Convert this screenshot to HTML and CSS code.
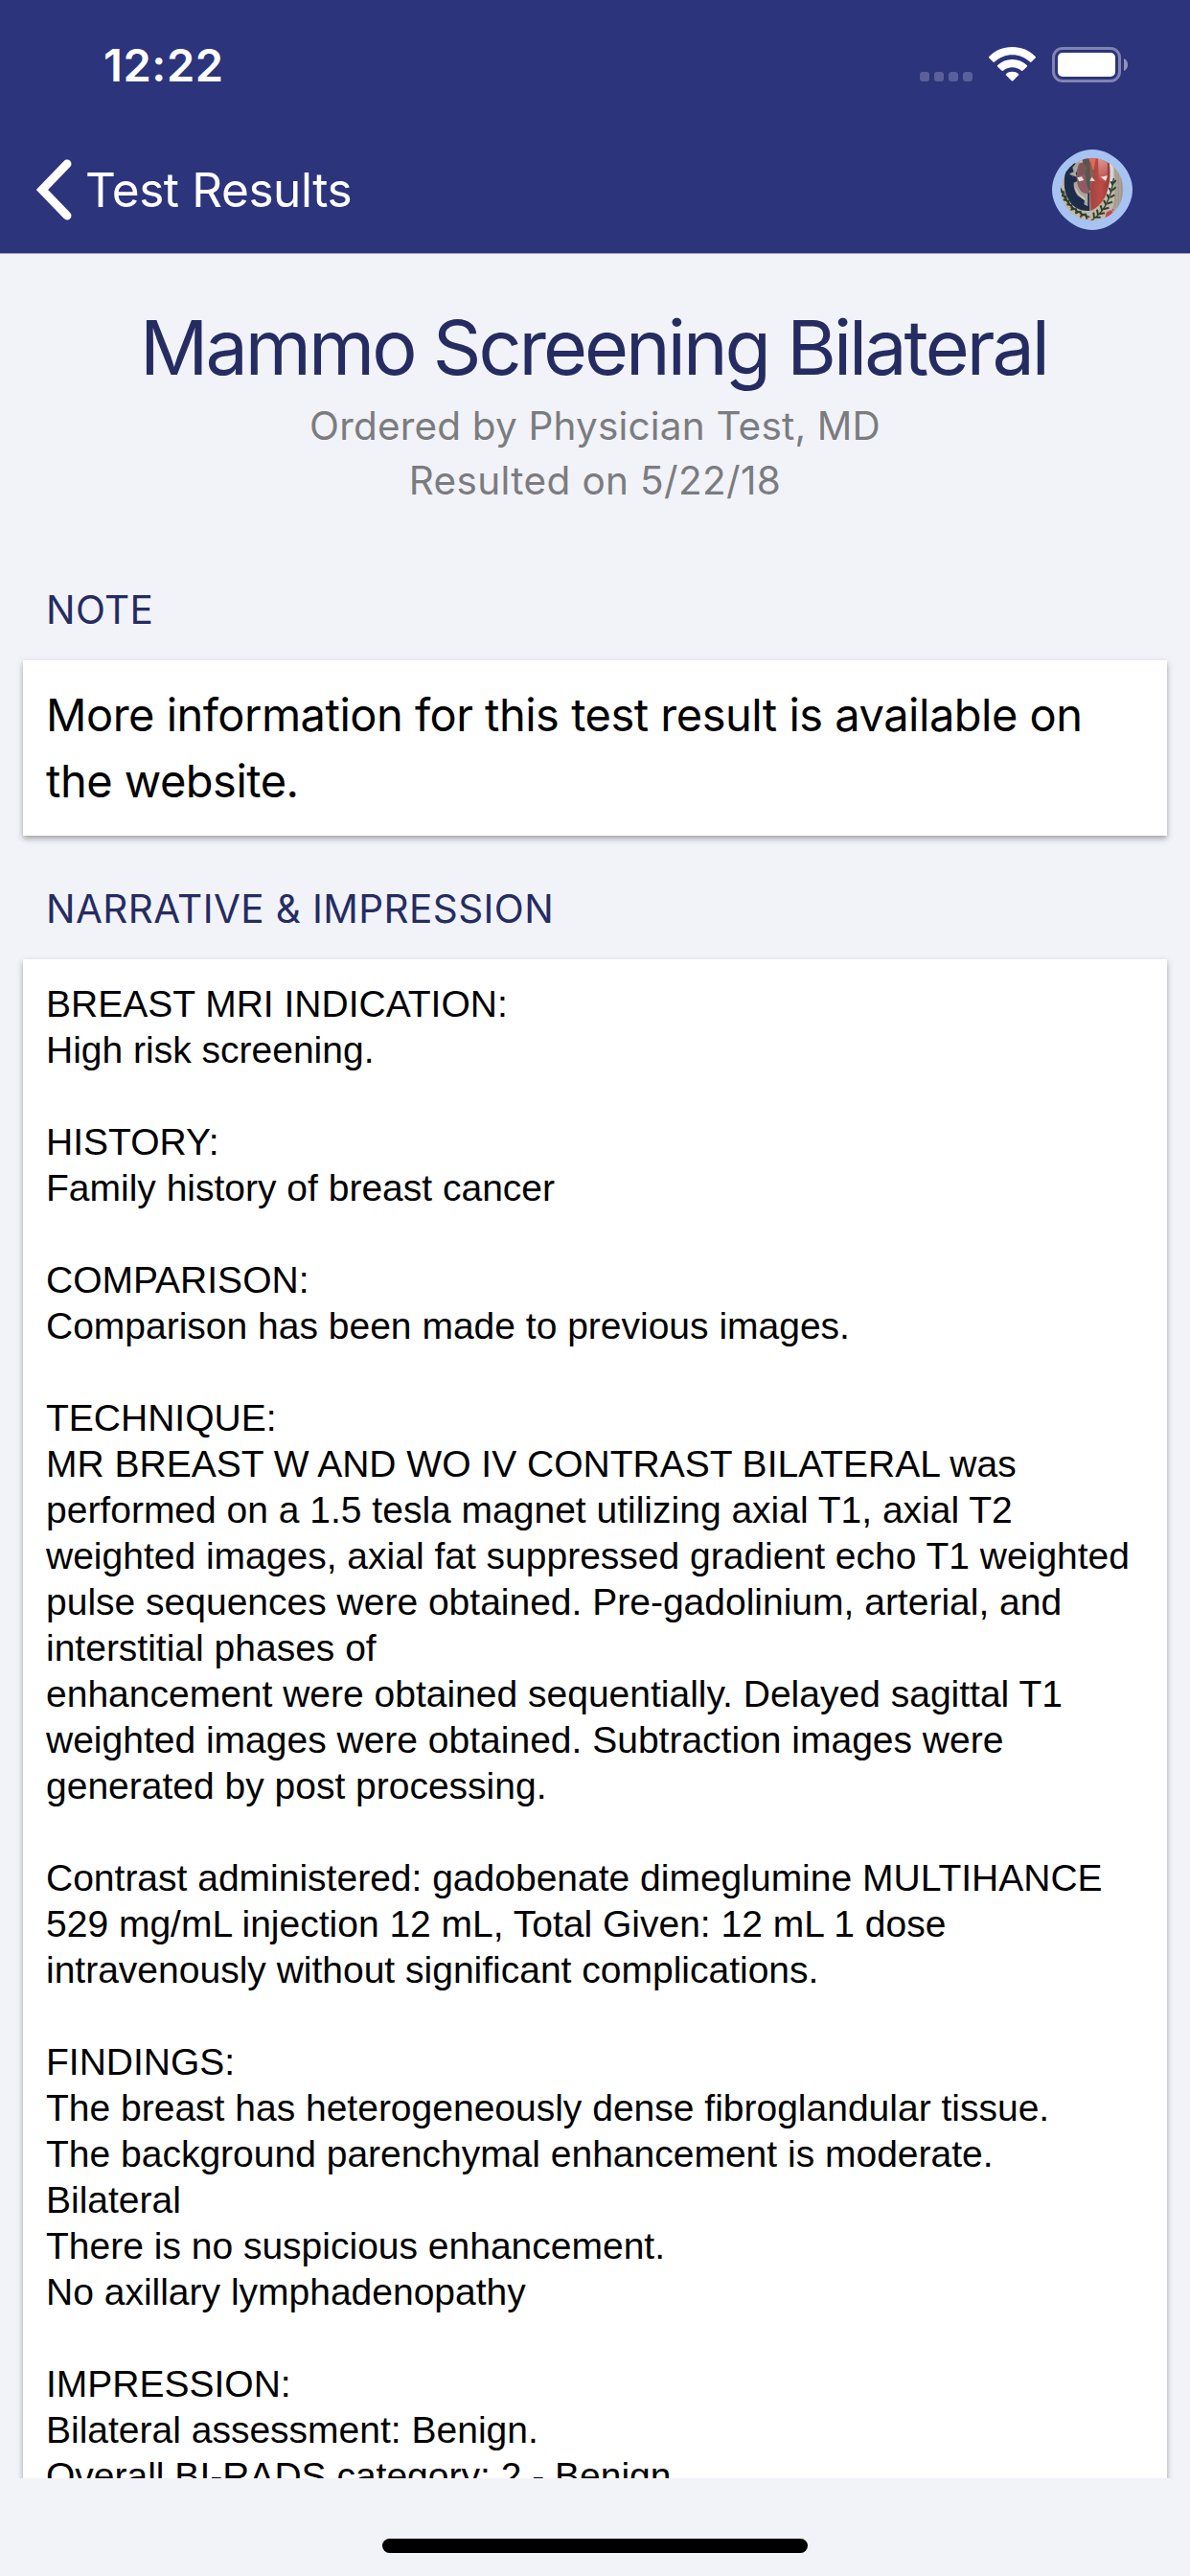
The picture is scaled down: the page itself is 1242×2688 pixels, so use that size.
FILE: index.html
```html
<!DOCTYPE html>
<html lang="en">
<head>
<meta charset="utf-8">
<title>Test Results</title>
<link rel="stylesheet" href="styles.css">
</head>
<body>
<div class="screen">
  <header class="header">
    <div class="status-bar">
      <span class="time">12:22</span>
      <div class="status-icons">
        <div class="dots"><i></i><i></i><i></i><i></i></div>
        <svg class="wifi" width="49" height="36" viewBox="0 0 49 36" fill="#fff">
          <path d="M24.5 0C34 0 42.600 3.600 48.600 9.900C49.200 10.500 49.200 11 48.600 11.600L44.600 15.500C44 16.100 43.500 16.100 42.900 15.500C38 10.800 31.500 8.200 24.500 8.200C17.500 8.200 11 10.800 6.100 15.500C5.500 16.100 5 16.100 4.400 15.500L.4 11.600C-.2 11-.2 10.500 .4 9.900C6.400 3.600 15 0 24.500 0Z"/>
          <path d="M24.500 13C30.400 13 35.700 15.200 39.700 19C40.300 19.600 40.300 20.100 39.700 20.700L35.700 24.600C35.100 25.200 34.600 25.200 34 24.700C31.400 22.400 28.100 21.200 24.500 21.200C20.900 21.200 17.600 22.400 15 24.700C14.400 25.200 13.900 25.200 13.300 24.600L9.300 20.700C8.700 20.100 8.700 19.600 9.300 19C13.300 15.200 18.600 13 24.500 13Z"/>
          <path d="M24.500 25.800C27 25.800 29.200 26.600 30.900 28C31.500 28.500 31.500 29 30.900 29.600L25.300 35.200C24.800 35.700 24.200 35.700 23.700 35.200L18.100 29.600C17.500 29 17.500 28.500 18.100 28C19.800 26.600 22 25.800 24.500 25.800Z"/>
        </svg>
        <svg class="battery" width="80" height="37" viewBox="0 0 80 37">
          <rect x="1.500" y="1.500" width="69" height="34" rx="9.500" fill="none" stroke="#fff" stroke-opacity=".4" stroke-width="3"/>
          <rect x="6" y="6" width="60" height="25" rx="5" fill="#fff"/>
          <path d="M75 12C77.500 13 79 15.500 79 18.500S77.500 24 75 25Z" fill="#fff" fill-opacity=".48"/>
        </svg>
      </div>
    </div>
    <nav class="nav">
      <a class="back">
        <svg width="37" height="64" viewBox="0 0 37 64" fill="none" stroke="#fff" stroke-width="9" stroke-linecap="round" stroke-linejoin="miter"><path d="M32 5L6 32L32 59"/></svg>
        <span class="back-label">Test Results</span>
      </a>
      <svg class="avatar" width="84" height="84" viewBox="24 18 252 252">
        <defs>
          <clipPath id="face"><circle cx="149" cy="143" r="98"/></clipPath>
          <linearGradient id="red" x1="0" x2="1" y1="0" y2="0"><stop offset="0" stop-color="#a04440"/><stop offset=".55" stop-color="#bd4b45"/><stop offset="1" stop-color="#9a3836"/></linearGradient>
          <linearGradient id="shine" x1="0" x2="0" y1="0" y2="1"><stop offset="0" stop-color="#e8aaa0" stop-opacity=".8"/><stop offset="1" stop-color="#e8aaa0" stop-opacity="0"/></linearGradient>
        </defs>
        <path d="M150 18C214 18 276 80 276 144S214 270 150 270S24 208 24 144S86 18 150 18Z" fill="#a6c3f2"/>
        <g clip-path="url(#face)">
          <rect x="45" y="40" width="210" height="210" fill="#c0b8aa"/>
          <path d="M213 45H255V225H205C226 170 230 110 213 45Z" fill="#aaa59a"/>
          <path d="M222 80V200M232 80V200M241 90V190" stroke="#8f8b82" stroke-width="2"/>
          <path d="M92 46C62 68 54 130 72 168C86 198 110 212 142 210V150L100 122L84 96L100 70Z" fill="#1e2c4b"/>
          <path d="M92 60C78 80 76 98 90 104L82 118C80 150 104 172 126 196L132 176L118 150L102 122L112 70Z" fill="#1e2c4b"/>
          <path d="M98 62L110 52L106 78L98 92L102 104L84 98L78 94L92 88L88 74ZM92 122L102 118Q108 150 136 156V196L124 190L126 178L104 162Q90 142 92 122Z" fill="#a9a69c"/>
          <path d="M96 132Q104 158 126 170L132 180L112 164Q98 152 96 132Z" fill="#d8d2c4"/>
          <path d="M110 60C96 84 98 132 116 150Q128 160 141 154V56Z" fill="#8f5a63"/>
          <path d="M118 45H146V150Q132 142 130 110Z" fill="#575653"/>
          <path d="M110 66Q122 54 132 76L128 96L106 100Z" fill="#7c5559"/>
          <path d="M142 44H202C212 92 208 184 145 210Z" fill="url(#red)"/>
          <path d="M168 44H196Q200 90 194 126L170 108Z" fill="url(#shine)"/>
          <path d="M138 44H162L154 84L148 74Z" fill="#e2695c"/>
          <path d="M144 54L156 96L150 122L143 140Z" fill="#856156"/>
          <path d="M103 106L117 103L124 114L109 118ZM142 116L149 104L159 117ZM176 104L198 100L192 116Z" fill="#e9e3dc"/>
          <path d="M207 50Q218 110 200 158" fill="none" stroke="#d5d7df" stroke-width="10"/>
          <path d="M194 215l14-8 8 10-12 14-14 4zM212 202l6 4-4 5z" fill="#c84550"/>
          <path d="M51 138Q68 204 142 230M147 240Q204 206 217 108" fill="none" stroke="#2c4029" stroke-width="4"/>
          <path d="M58 148l-8 2M60 148l2 12M64 164l-10-2M66 162l3 15M72 178l-13-3M74 176l4 16M84 192l-14-2M84 190l4 17M97 203l-15 3M98 202l4 17M111 212l-15 5M112 210l6 17M126 220l-14 8M128 218l6 18M156 234l-2-19M160 230l16 0M168 224l-3-18M172 220l17-3M181 210l-5-17M185 205l17-5M194 192l-8-15M197 188l16-6M203 172l-7-14M206 168l14-8M210 152l-7-14M212 146l12-10M215 130l-7-12M216 124l8-10" fill="none" stroke="#2c4029" stroke-width="6"/>
          <path d="M60 158h4M80 198h4M111 231h5M152 237h4" stroke="#b84740" stroke-width="4"/>
        </g>
      </svg>
    </nav>
  </header>

  <main class="content">
    <h1 class="title">Mammo Screening Bilateral</h1>
    <p class="meta">Ordered by Physician Test, MD<br><span class="resulted">Resulted on 5/22/18</span></p>

    <h2 class="section-title">NOTE</h2>
    <section class="card note">More information for this test result is available on<br>the website.</section>

    <h2 class="section-title narrative-title">NARRATIVE &amp; IMPRESSION</h2>
    <section class="card report">BREAST MRI INDICATION:
High risk screening.

HISTORY:
Family history of breast cancer

COMPARISON:
Comparison has been made to previous images.

TECHNIQUE:
MR BREAST W AND WO IV CONTRAST BILATERAL was
performed on a 1.5 tesla magnet utilizing axial T1, axial T2
weighted images, axial fat suppressed gradient echo T1 weighted
pulse sequences were obtained. Pre-gadolinium, arterial, and
interstitial phases of
enhancement were obtained sequentially. Delayed sagittal T1
weighted images were obtained. Subtraction images were
generated by post processing.

Contrast administered: gadobenate dimeglumine MULTIHANCE
529 mg/mL injection 12 mL, Total Given: 12 mL 1 dose
intravenously without significant complications.

FINDINGS:
The breast has heterogeneously dense fibroglandular tissue.
The background parenchymal enhancement is moderate.
Bilateral
There is no suspicious enhancement.
No axillary lymphadenopathy

IMPRESSION:
Bilateral assessment: Benign.
Overall BI-RADS category: 2 - Benign</section>
  </main>

  <footer class="home-area"><div class="home-indicator"></div></footer>
</div>
</body>
</html>
```
FILE: styles.css
```css
* { box-sizing: border-box; margin: 0; padding: 0; }

body {
  background: #f2f3f9;
  font-family: Inter, "Liberation Sans", sans-serif;
  color: #000;
}

.screen {
  width: 1242px;
  height: 2688px;
  display: flex;
  flex-direction: column;
  overflow: hidden;
}

/* Header */
.header {
  flex: none;
  height: 265px;
  background: #2c347c;
  border-bottom: 1px solid #a3a3a8;
  color: #fff;
}

.status-bar {
  height: 132px;
  padding: 40px 65px 0 108px;
  display: flex;
  justify-content: space-between;
  align-items: flex-start;
}

.time {
  font-size: 47px;
  font-weight: 600;
  line-height: 56px;
  letter-spacing: .6px;
}

.status-icons {
  display: flex;
  align-items: flex-start;
  padding-top: 9px;
}

.dots {
  display: flex;
  gap: 5px;
  padding-top: 26px;
  margin-right: 17px;
}

.dots i {
  width: 10px;
  height: 10px;
  border-radius: 3px;
  background: rgba(255, 255, 255, .22);
}

.battery { margin-left: 17px; margin-right: -1px; }

.nav {
  height: 132px;
  padding: 0 60px 0 38px;
  display: flex;
  justify-content: space-between;
  align-items: center;
}

.back { display: flex; align-items: center; }

.back-label {
  margin-left: 14px;
  font-size: 49.500px;
  line-height: 64px;
  letter-spacing: -.4px;
}

/* Content */
.content {
  flex: none;
  height: 2321px;
  padding: 49px 24px 0;
  overflow: hidden;
}

.title {
  padding-right: 3px;
  font-size: 79px;
  font-weight: 400;
  line-height: 96px;
  letter-spacing: -3px;
  text-align: center;
  color: #252c62;
}

.meta {
  margin-top: 6px;
  font-size: 40.500px;
  line-height: 57px;
  letter-spacing: .18px;
  text-align: center;
  color: #7b7c80;
}

.resulted { letter-spacing: .35px; }

.section-title {
  margin: 83px 24px 28px;
  font-size: 40.500px;
  font-weight: 400;
  line-height: 48px;
  letter-spacing: .4px;
  color: #252c62;
}

.narrative-title { margin-top: 53px; }

.card {
  padding: 22px 24px 23px;
  background: #fff;
  box-shadow: 0 3px 6px rgba(0, 0, 0, .34);
}

.note {
  font-size: 47px;
  line-height: 69px;
  letter-spacing: -.5px;
}

.report {
  height: 1700px;
  padding-top: 23px;
  font-family: "Liberation Sans", Arial, sans-serif;
  font-size: 39px;
  line-height: 48px;
  white-space: pre;
}

/* Home indicator */
.home-area {
  flex: 1;
  display: flex;
  justify-content: center;
  align-items: flex-end;
  padding-bottom: 24px;
}

.home-indicator {
  width: 444px;
  height: 15px;
  border-radius: 8px;
  background: #000;
}
```
